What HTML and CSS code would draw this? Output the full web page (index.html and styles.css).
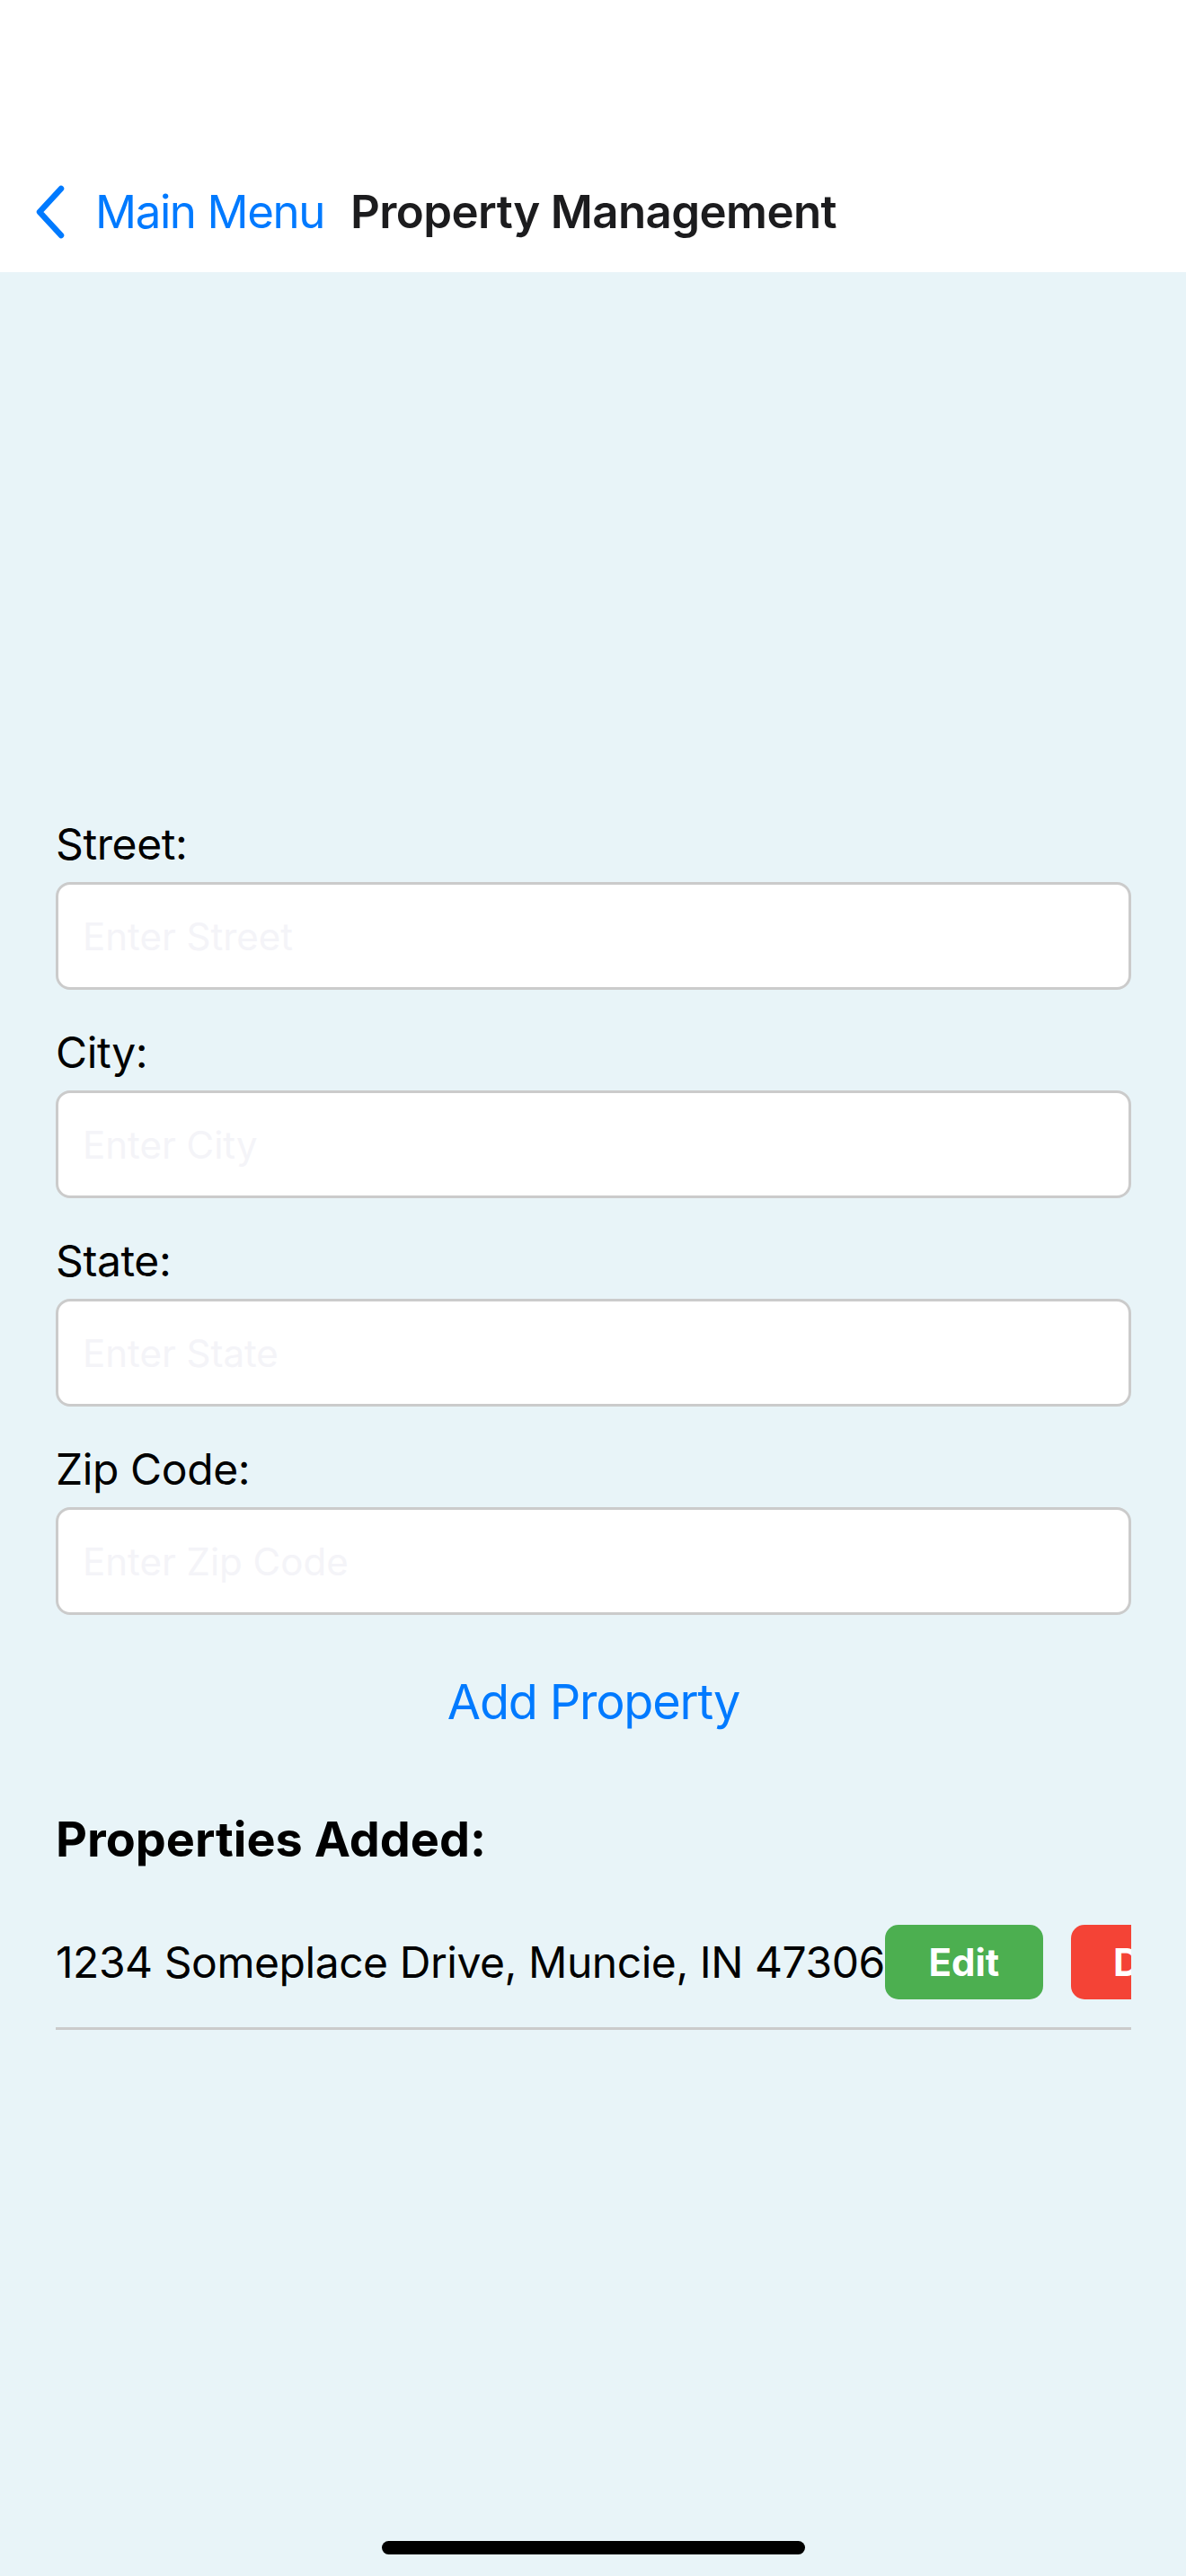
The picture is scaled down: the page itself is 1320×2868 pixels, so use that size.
FILE: index.html
```html
<!DOCTYPE html>
<html lang="en">
<head>
<meta charset="utf-8">
<title>Property Management</title>
<link rel="stylesheet" href="styles.css">
</head>
<body>
<div class="screen">
  <header class="nav">
    <div class="nav-row">
      <a class="back" href="#">
        <svg class="chevron" width="36" height="60" viewBox="0 0 36 60" aria-hidden="true">
          <path d="M31 4 L7 30 L31 56" fill="none" stroke="#007AFF" stroke-width="6.5" stroke-linecap="round" stroke-linejoin="round"/>
        </svg>
        <span class="back-label">Main Menu</span>
      </a>
      <h1 class="nav-title">Property Management</h1>
    </div>
  </header>

  <main class="content">
    <form class="form">
      <div class="field">
        <label class="field-label" for="street">Street:</label>
        <input class="field-input" id="street" type="text" placeholder="Enter Street">
      </div>
      <div class="field">
        <label class="field-label" for="city">City:</label>
        <input class="field-input" id="city" type="text" placeholder="Enter City">
      </div>
      <div class="field">
        <label class="field-label" for="state">State:</label>
        <input class="field-input" id="state" type="text" placeholder="Enter State">
      </div>
      <div class="field">
        <label class="field-label" for="zip">Zip Code:</label>
        <input class="field-input" id="zip" type="text" placeholder="Enter Zip Code">
      </div>
      <button class="add-btn" type="button">Add Property</button>
    </form>

    <h2 class="list-title">Properties Added:</h2>
    <ul class="list">
      <li class="list-row">
        <span class="address">1234 Someplace Drive, Muncie, IN 47306</span>
        <button class="btn btn-edit" type="button">Edit</button>
        <button class="btn btn-delete" type="button">Delete</button>
      </li>
    </ul>
  </main>

  <div class="home-indicator"></div>
</div>
</body>
</html>
```
FILE: styles.css
```css
* {
  box-sizing: border-box;
}

html, body {
  margin: 0;
  padding: 0;
}

body {
  font-family: Inter, "Noto Sans", "Liberation Sans", sans-serif;
  background: #e8f4f8;
  color: #000;
}

.screen {
  position: relative;
  width: 1320px;
  min-height: 2868px;
  background: #e8f4f8;
  overflow: hidden;
}

/* Navigation bar */
.nav {
  background: #ffffff;
  height: 303px;
  padding-top: 203px;
}

.nav-row {
  display: flex;
  align-items: center;
  height: 66px;
  padding-left: 37px;
}

.back {
  display: flex;
  align-items: center;
  text-decoration: none;
  color: #007aff;
}

.chevron {
  display: block;
  margin-right: 33px;
}

.back-label {
  font-size: 51px;
  line-height: 66px;
  font-weight: 400;
  letter-spacing: -1.4px;
}

.nav-title {
  margin: 0 0 0 29px;
  font-size: 51px;
  line-height: 66px;
  font-weight: 600;
  color: #1c1c1e;
  letter-spacing: -0.6px;
}

/* Content */
.content {
  padding: 607px 61px 0 62px;
}

.form {
  display: flex;
  flex-direction: column;
}

.field {
  display: flex;
  flex-direction: column;
  gap: 12px;
  margin-bottom: 40px;
}

.field:last-of-type {
  margin-bottom: 0;
}

.field-label {
  font-size: 48px;
  line-height: 60px;
  color: #000;
  letter-spacing: -0.4px;
}

.field-input {
  height: 120px;
  width: 100%;
  border: 3px solid #cbcbcb;
  border-radius: 16px;
  background: #ffffff;
  padding: 0 27px;
  font-family: inherit;
  font-size: 42px;
  color: #000;
  outline: none;
}

.field-input::placeholder {
  color: #f4f4f8;
}

.add-btn {
  align-self: center;
  margin-top: 64px;
  background: none;
  border: 0;
  padding: 0;
  font-family: inherit;
  font-size: 54px;
  line-height: 66px;
  color: #007aff;
  letter-spacing: -1.2px;
}

.list-title {
  margin: 87px 0 0 0;
  font-size: 54px;
  line-height: 66px;
  font-weight: 700;
  letter-spacing: 0;
}

.list {
  list-style: none;
  margin: 62px 0 0 0;
  padding: 0;
}

.list-row {
  display: flex;
  align-items: center;
  height: 117px;
  padding-bottom: 31px;
  border-bottom: 3px solid #cbcbcb;
  overflow: hidden;
  white-space: nowrap;
}

.address {
  flex: none;
  font-size: 48px;
  line-height: 58px;
  letter-spacing: -0.45px;
}

.btn {
  flex: none;
  height: 83px;
  border: 0;
  border-radius: 15px;
  color: #ffffff;
  font-family: inherit;
  font-size: 42px;
  font-weight: 700;
  padding: 0 47px;
}

.btn-edit {
  width: 176px;
  background: #4caf50;
}

.btn-delete {
  margin-left: 31px;
  background: #f44336;
}

.home-indicator {
  position: absolute;
  left: 425px;
  bottom: 24px;
  width: 471px;
  height: 15px;
  border-radius: 8px;
  background: #000;
}
```
